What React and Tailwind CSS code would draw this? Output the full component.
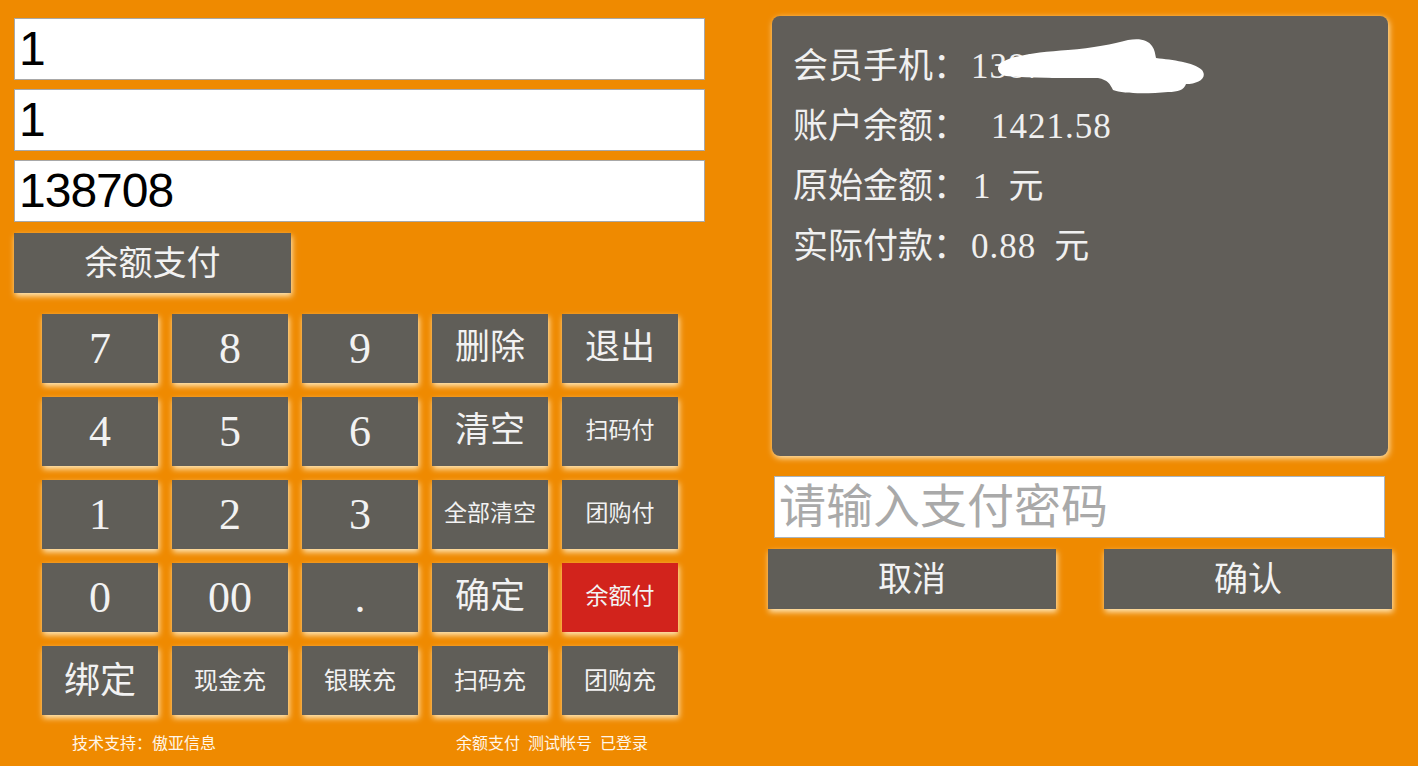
import React from 'react'

const keys = [
  { t: '7', s: 'text-[44px]' }, { t: '8', s: 'text-[44px]' }, { t: '9', s: 'text-[44px]' },
  { t: '删除', s: 'text-[35px]' }, { t: '退出', s: 'text-[35px]' },
  { t: '4', s: 'text-[44px]' }, { t: '5', s: 'text-[44px]' }, { t: '6', s: 'text-[44px]' },
  { t: '清空', s: 'text-[35px]' }, { t: '扫码付', s: 'text-[23px]' },
  { t: '1', s: 'text-[44px]' }, { t: '2', s: 'text-[44px]' }, { t: '3', s: 'text-[44px]' },
  { t: '全部清空', s: 'text-[23px]' }, { t: '团购付', s: 'text-[23px]' },
  { t: '0', s: 'text-[44px]' }, { t: '00', s: 'text-[44px]' }, { t: '.', s: 'text-[44px]' },
  { t: '确定', s: 'text-[35px]' }, { t: '余额付', s: 'text-[23px]', red: true },
  { t: '绑定', s: 'text-[36px]' }, { t: '现金充', s: 'text-[24px]' }, { t: '银联充', s: 'text-[24px]' },
  { t: '扫码充', s: 'text-[24px]' }, { t: '团购充', s: 'text-[24px]' },
]

const serif = 'font-["Liberation_Serif","Noto_Sans_CJK_SC",serif]'
const glow = 'shadow-[1px_3px_6px_rgba(255,238,200,0.95)]'

function Field({ value }) {
  return (
    <div className="h-[62px] bg-white border border-[#a8a8a8] flex items-center pl-[4px] text-[48px] text-black font-['Liberation_Sans',sans-serif] leading-none tracking-[-1px]">
      {value}
    </div>
  )
}

export default function App() {
  return (
    <div className="w-[1418px] h-[766px] bg-[#ef8a00] flex overflow-hidden">
      {/* left side */}
      <div className="ml-[14px] pt-[18px] w-[691px] flex flex-col">
        <div className="flex flex-col gap-[9px]">
          <Field value="1" />
          <Field value="1" />
          <Field value="138708" />
        </div>
        <button className={`mt-[11px] w-[277px] h-[60px] bg-[#605e58] text-[#f2f2f2] text-[34px] ${serif} ${glow}`}>
          余额支付
        </button>

        <div className="ml-[28px] mt-[21px] grid grid-cols-[repeat(5,116px)] auto-rows-[69px] gap-x-[14px] gap-y-[14px]">
          {keys.map((k, i) => (
            <div
              key={i}
              className={`flex items-center justify-center text-[#f2f2f2] ${serif} ${k.s} ${glow} ${k.red ? 'bg-[#d2231c]' : 'bg-[#605e58]'}`}
            >
              {k.t}
            </div>
          ))}
        </div>

        <div className="mt-[19px] flex text-[16px] text-[#fff6e8] font-['Noto_Sans_CJK_SC',sans-serif] leading-none">
          <span className="ml-[58px]">技术支持：傲亚信息</span>
          <span className="ml-[240px] flex gap-[8px]">
            <span>余额支付</span>
            <span>测试帐号</span>
            <span>已登录</span>
          </span>
        </div>
      </div>

      {/* right side */}
      <div className="ml-[63px] pt-[16px] w-[624px] flex flex-col">
        <div className={`relative ml-[4px] w-[616px] h-[440px] rounded-[8px] bg-[#615e59] pl-[21px] pt-[21px] text-[#f0f0f0] text-[35px] leading-[60px] ${serif} shadow-[1px_2px_6px_rgba(255,238,200,0.95)]`}>
          <div className="flex items-baseline">
            <span>会员手机：</span>
            <span className="ml-[3px] tracking-[1px]">1387081</span>
          </div>
          <div className="flex items-baseline">
            <span>账户余额：</span>
            <span className="ml-[23px] tracking-[1px]">1421.58</span>
          </div>
          <div className="flex items-baseline">
            <span>原始金额：</span>
            <span className="ml-[5px]">1</span>
            <span className="ml-[18px]">元</span>
          </div>
          <div className="flex items-baseline">
            <span>实际付款：</span>
            <span className="ml-[3px] tracking-[1px]">0.88</span>
            <span className="ml-[18px]">元</span>
          </div>
          {/* redaction smear */}
          <svg className="absolute left-[226px] top-[22px]" width="212" height="60" viewBox="0 0 212 60">
            <path
              d="M2 26 C10 18 40 14 70 12 C95 10 115 6 130 2 C142 0 150 2 154 8 C157 12 157 16 158 20 C175 22 195 24 204 32 C210 40 200 46 188 46 C186 52 180 54 170 54 C150 56 125 56 115 52 C112 46 110 42 100 40 C70 40 35 40 8 38 C0 36 -2 30 2 26 Z"
              fill="#ffffff"
            />
          </svg>
        </div>

        <div className="mt-[20px] ml-[6px] w-[611px] h-[62px] bg-white border border-[#a8b4c0] flex items-center pl-[4px]">
          <span className={`text-[47px] text-[#a9a9a9] leading-none ${serif}`}>请输入支付密码</span>
        </div>

        <div className="mt-[11px] flex justify-between">
          <button className={`w-[288px] h-[60px] bg-[#605e58] text-[#f2f2f2] text-[34px] ${serif} ${glow}`}>取消</button>
          <button className={`w-[288px] h-[60px] bg-[#605e58] text-[#f2f2f2] text-[34px] ${serif} ${glow}`}>确认</button>
        </div>
      </div>
    </div>
  )
}
